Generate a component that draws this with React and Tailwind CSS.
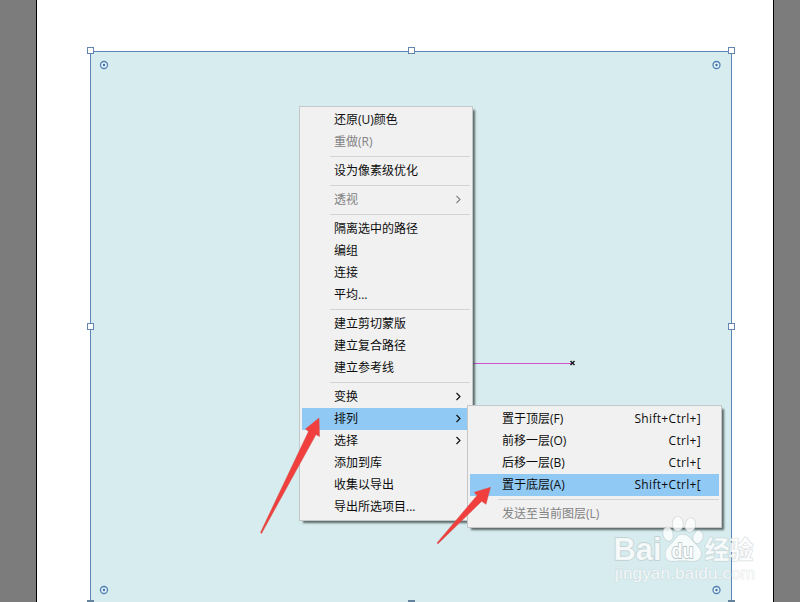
import React from "react";

const mainItems = [
  { label: "还原(U)颜色" },
  { label: "重做(R)", disabled: true },
  null,
  { label: "设为像素级优化" },
  null,
  { label: "透视", disabled: true, sub: true },
  null,
  { label: "隔离选中的路径" },
  { label: "编组" },
  { label: "连接" },
  { label: "平均..." },
  null,
  { label: "建立剪切蒙版" },
  { label: "建立复合路径" },
  { label: "建立参考线" },
  null,
  { label: "变换", sub: true },
  { label: "排列", sub: true, active: true },
  { label: "选择", sub: true },
  { label: "添加到库" },
  { label: "收集以导出" },
  { label: "导出所选项目..." },
];

const arrangeItems = [
  { label: "置于顶层(F)", keys: "Shift+Ctrl+]" },
  { label: "前移一层(O)", keys: "Ctrl+]" },
  { label: "后移一层(B)", keys: "Ctrl+[" },
  { label: "置于底层(A)", keys: "Shift+Ctrl+[", active: true },
  null,
  { label: "发送至当前图层(L)", disabled: true },
];

function Chevron() {
  return (
    <svg className="mb-[2px] mr-2 h-[9px] w-[7px]" viewBox="0 0 7 9" fill="none" stroke="currentColor" strokeWidth="1.1">
      <path d="M1.5 1 5 4.5 1.5 8" />
    </svg>
  );
}

function Menu({ items, className }) {
  return (
    <div className={"absolute flex flex-col border border-[#c3c7c7] bg-[#f1f1f1] p-[2px] " + className}>
      {items.map((item, i) =>
        item === null ? (
          <div key={i} className="ml-7 h-[7px] pt-[3px]">
            <div className="h-px bg-[#d4d4d4]" />
          </div>
        ) : (
          <div
            key={i}
            className={
              "flex h-[22px] items-center justify-between pl-8 text-[12px] leading-[22px] " +
              (item.active ? "bg-[#91c9f5] " : "") +
              (item.disabled ? "text-[#828282]" : "text-[#0c0c0c]")
            }
          >
            <span className="whitespace-nowrap">{item.label}</span>
            {item.keys && <span className="mr-[18px] tracking-[0.32px]">{item.keys}</span>}
            {item.sub && <Chevron />}
          </div>
        )
      )}
    </div>
  );
}

const handles = [
  [87, 47], [408, 47], [728, 47],
  [87, 323], [728, 323],
];
const footHandles = [[87, 600], [408, 600], [728, 600]];
const corners = [[104, 65], [716.5, 65], [104, 590], [716.5, 590]];

function Overlay() {
  return (
    <svg className="absolute inset-0" width="800" height="602" viewBox="0 0 800 602">
      <g fill="#fff" stroke="#6484b0">
        {handles.map(([x, y]) => (
          <rect key={x + "-" + y} x={x + 0.5} y={y + 0.5} width="6" height="6" />
        ))}
      </g>
      <g fill="#65829c">
        {footHandles.map(([x, y]) => (
          <rect key={x} x={x} y={y} width="7" height="2" />
        ))}
      </g>
      {corners.map(([x, y]) => (
        <g key={x + "-" + y}>
          <circle cx={x} cy={y} r="3.5" fill="#e6f4f6" stroke="#4f7fb4" strokeWidth="1.3" />
          <circle cx={x} cy={y} r="1.2" fill="#3f70aa" />
        </g>
      ))}
      <rect x="472" y="363" width="100" height="1" fill="#cf4fcf" />
      <path d="M570.5 361l4 4M574.5 361l-4 4" stroke="#15151c" strokeWidth="1.4" />
    </svg>
  );
}

function Arrows() {
  return (
    <svg className="absolute inset-0" width="800" height="602" viewBox="0 0 800 602">
      <g fill="#f03f3d" stroke="#d0504c" strokeWidth="0.5" strokeLinejoin="round">
        <path d="M319 418 305.5 429 308.5 431.5 260.5 532.5 261.5 533.5 316 434.5 319.5 436.5Z" />
        <path d="M490.5 487.3 474.3 492.3 477 495.5 437 543 438 543.8 481.7 501.3 486 504.3Z" />
      </g>
    </svg>
  );
}

function Watermark() {
  return (
    <svg className="absolute inset-0" width="800" height="602" viewBox="0 0 800 602">
      <g fill="#fff" fillOpacity="0.78" stroke="#b4c0c2" strokeOpacity="0.55" strokeWidth="1.2" strokeLinejoin="round" style={{ paintOrder: "stroke" }}>
        <text x="613.5" y="560" fontSize="31" fontWeight="700" textLength="48" lengthAdjust="spacingAndGlyphs" strokeWidth="1.8" className="font-['Liberation_Sans',sans-serif]">Bai</text>
        <ellipse cx="668" cy="534" rx="4.8" ry="7" transform="rotate(-12 668 534)" />
        <ellipse cx="677.8" cy="523.8" rx="5.2" ry="7.3" />
        <ellipse cx="690.3" cy="525" rx="5" ry="7" transform="rotate(12 690.3 525)" />
        <ellipse cx="698" cy="537" rx="4.8" ry="6.3" transform="rotate(16 698 537)" />
        <path d="M682.5 534.5c6 0 8 4.5 12 8.5 4 4 7 7 6.5 11.500-.6 6-5 7-10 6.500-6-.6-11-.6-16 0-5 .5-9-.7-9.600-6-.5-5 3-8.500 6.600-12 4-4 5-8.500 10.500-8.500Z" />
        <text x="671.5" y="557.5" fontSize="20" fontWeight="700" textLength="22" lengthAdjust="spacingAndGlyphs" fillOpacity="1" stroke="#a9bcc0" strokeOpacity="0.85" strokeWidth="1.8" className="font-['Liberation_Sans',sans-serif]">du</text>
        <text x="704.5" y="558.5" fontSize="25" fontWeight="700" textLength="49" className="font-['Noto_Sans_CJK_SC',sans-serif]">经验</text>
        <text x="615" y="579" fontSize="17" textLength="140" strokeOpacity="0.35" className="font-['Liberation_Sans',sans-serif]">jingyan.baidu.com</text>
      </g>
    </svg>
  );
}

export default function App() {
  return (
    <div className="relative flex h-[602px] w-[800px] overflow-hidden bg-[#7c7c7c] font-['Open_Sans','Noto_Sans_CJK_SC',sans-serif]">
      <div className="ml-9 flex h-full w-[738px] border-x border-black bg-white pl-[53px] pt-[51px]">
        <div className="h-full w-[642px] border-x border-t border-[#5d84b5] bg-[#d7ecee]" />
      </div>
      <Overlay />
      <Menu items={mainItems} className="left-[299px] top-[106px] w-[174px] shadow-[3px_3px_2px_-1px_rgba(50,60,60,0.75)]" />
      <Menu items={arrangeItems} className="left-[467px] top-[405px] w-[255px] shadow-[3px_3px_2px_-1px_rgba(50,60,60,0.75)]" />
      <Arrows />
      <Watermark />
    </div>
  );
}
